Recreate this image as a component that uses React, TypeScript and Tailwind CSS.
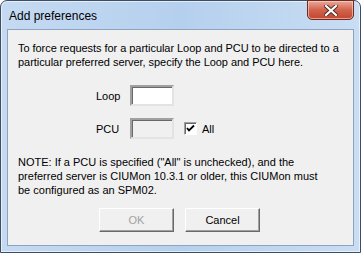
export default function App() {
  const font = { fontFamily: '"Liberation Sans", Arial, sans-serif' };
  return (
    <div className="w-[361px] h-[253px] bg-white" style={font}>
      <div className="relative flex h-[253px] w-[361px] flex-col rounded-t-[7px] border border-[#3c4d64] bg-gradient-to-r from-[#c5daf2] via-[#b5d0ee] to-[#c9ddf3] shadow-[inset_0_0_0_1px_rgba(255,255,255,0.6)]">
        <div className="flex h-[28px] items-center pl-[8px] pt-[1px] text-[12px] text-black">
          Add preferences
        </div>
        <div className="absolute right-[6px] top-[-1px] flex h-[20px] w-[47px] items-center justify-center rounded-b-[5px] border border-[#6e2a20] bg-gradient-to-b from-[#e8a89a] via-[#d2624c] to-[#c3452f] shadow-[inset_0_0_0_1px_rgba(255,220,210,0.6)]">
          <svg width="14" height="11" viewBox="0 0 14 11">
            <path d="M2 1 L12 10 M12 1 L2 10" stroke="#4a2a25" strokeWidth="4" strokeLinecap="square" />
            <path d="M2 1 L12 10 M12 1 L2 10" stroke="#ffffff" strokeWidth="2.2" strokeLinecap="square" />
          </svg>
        </div>
        <div className="mx-[6px] mb-[6px] flex flex-1 flex-col border border-[#8ea3bd] bg-[#f0f0f0] text-[11px] leading-[14px] text-black">
          <div className="pl-[10px] pt-[11px] tracking-[-0.05px]">
            To force requests for a particular Loop and PCU to be directed to a
            <br />
            particular preferred server, specify the Loop and PCU here.
          </div>
          <div className="mt-[16px] flex items-center pl-[88px]">
            <span className="w-[34px]">Loop</span>
            <div className="h-[21px] w-[44px] border-2 border-t-[#a0a0a0] border-l-[#a0a0a0] border-b-[#e3e3e3] border-r-[#e3e3e3] bg-white shadow-[inset_1px_1px_0_#696969]" />
          </div>
          <div className="mt-[12px] flex items-center pl-[88px]">
            <span className="w-[34px]">PCU</span>
            <div className="h-[21px] w-[44px] border-2 border-t-[#a0a0a0] border-l-[#a0a0a0] border-b-[#e3e3e3] border-r-[#e3e3e3] bg-[#f0f0f0] shadow-[inset_1px_1px_0_#696969]" />
            <div className="ml-[10px] flex h-[13px] w-[13px] items-center justify-center border border-t-[#a0a0a0] border-l-[#a0a0a0] border-b-white border-r-white bg-white shadow-[inset_1px_1px_0_#696969]">
              <svg width="9" height="9" viewBox="0 0 9 9">
                <path d="M1 4 L3 6.5 L8 1.5" stroke="#000" strokeWidth="1.8" fill="none" />
              </svg>
            </div>
            <span className="ml-[5px]">All</span>
          </div>
          <div className="pl-[10px] pt-[16px]">
            NOTE: If a PCU is specified ("All" is unchecked), and the
            <br />
            preferred server is CIUMon 10.3.1 or older, this CIUMon must
            <br />
            be configured as an SPM02.
          </div>
          <div className="mt-[11px] flex gap-[11px] pl-[91px]">
            <div className="flex h-[24px] w-[75px] items-center justify-center border border-t-white border-l-white border-b-[#696969] border-r-[#696969] bg-[#f0f0f0] text-[#a0a0a0] shadow-[inset_-1px_-1px_0_#a0a0a0]">
              OK
            </div>
            <div className="flex h-[24px] w-[75px] items-center justify-center border border-t-white border-l-white border-b-[#696969] border-r-[#696969] bg-[#f0f0f0] text-black shadow-[inset_-1px_-1px_0_#a0a0a0]">
              Cancel
            </div>
          </div>
        </div>
      </div>
    </div>
  );
}
